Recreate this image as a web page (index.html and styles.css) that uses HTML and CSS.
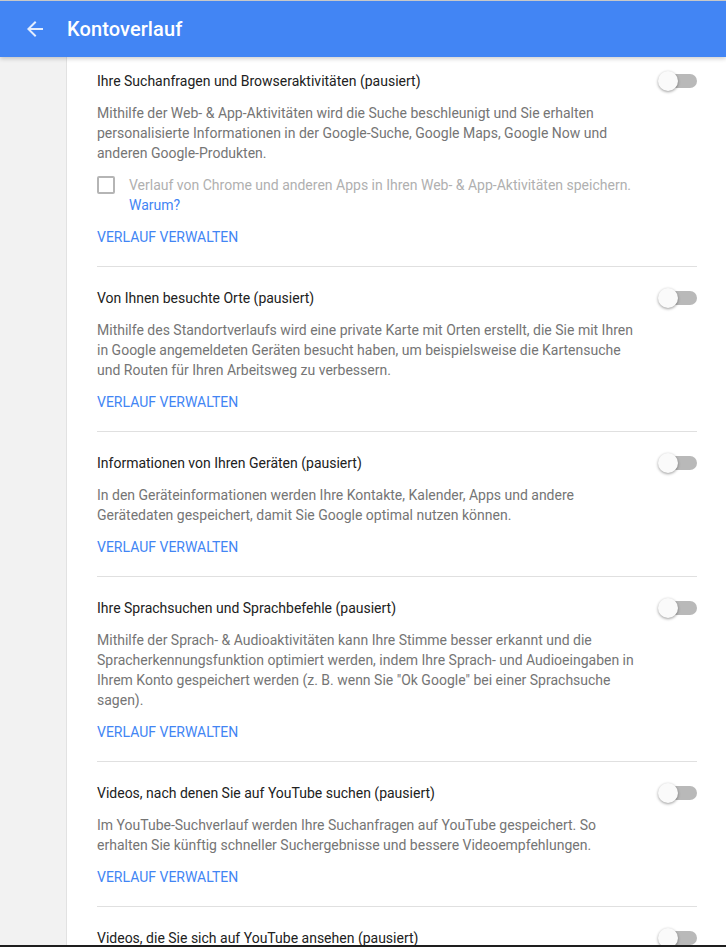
FILE: index.html
```html
<!DOCTYPE html>
<html lang="de">
<head>
<meta charset="utf-8">
<title>Kontoverlauf</title>
<link rel="stylesheet" href="styles.css">
</head>
<body>
<div class="frame">
  <header class="appbar">
    <svg class="back" width="24" height="24" viewBox="0 0 24 24"><path d="M20 11H7.83l5.59-5.59L12 4l-8 8 8 8 1.41-1.41L7.83 13H20v-2z" fill="currentColor"/></svg>
    <h1 class="title">Kontoverlauf</h1>
  </header>
  <div class="body">
    <aside class="side"></aside>
    <main class="content">
      <section class="item first">
        <div class="head"><span class="name">Ihre Suchanfragen und Browseraktivitäten (pausiert)</span><span class="switch"><span class="thumb"></span></span></div>
        <p class="desc">Mithilfe der Web- &amp; App-Aktivitäten wird die Suche beschleunigt und Sie erhalten personalisierte Informationen in der Google-Suche, Google Maps, Google Now und anderen Google-Produkten.</p>
        <div class="check"><span class="box"></span><span class="check-text">Verlauf von Chrome und anderen Apps in Ihren Web- &amp; App-Aktivitäten speichern. <a class="why">Warum?</a></span></div>
        <a class="manage">VERLAUF VERWALTEN</a>
      </section>
      <section class="item">
        <div class="head"><span class="name">Von Ihnen besuchte Orte (pausiert)</span><span class="switch"><span class="thumb"></span></span></div>
        <p class="desc">Mithilfe des Standortverlaufs wird eine private Karte mit Orten erstellt, die Sie mit Ihren in Google angemeldeten Geräten besucht haben, um beispielsweise die Kartensuche und Routen für Ihren Arbeitsweg zu verbessern.</p>
        <a class="manage">VERLAUF VERWALTEN</a>
      </section>
      <section class="item">
        <div class="head"><span class="name">Informationen von Ihren Geräten (pausiert)</span><span class="switch"><span class="thumb"></span></span></div>
        <p class="desc">In den Geräteinformationen werden Ihre Kontakte, Kalender, Apps und andere Gerätedaten gespeichert, damit Sie Google optimal nutzen können.</p>
        <a class="manage">VERLAUF VERWALTEN</a>
      </section>
      <section class="item">
        <div class="head"><span class="name">Ihre Sprachsuchen und Sprachbefehle (pausiert)</span><span class="switch"><span class="thumb"></span></span></div>
        <p class="desc">Mithilfe der Sprach- &amp; Audioaktivitäten kann Ihre Stimme besser erkannt und die Spracherkennungsfunktion optimiert werden, indem Ihre Sprach- und Audioeingaben in Ihrem Konto gespeichert werden (z. B. wenn Sie "Ok Google" bei einer Sprachsuche sagen).</p>
        <a class="manage">VERLAUF VERWALTEN</a>
      </section>
      <section class="item">
        <div class="head"><span class="name">Videos, nach denen Sie auf YouTube suchen (pausiert)</span><span class="switch"><span class="thumb"></span></span></div>
        <p class="desc">Im YouTube-Suchverlauf werden Ihre Suchanfragen auf YouTube gespeichert. So erhalten Sie künftig schneller Suchergebnisse und bessere Videoempfehlungen.</p>
        <a class="manage">VERLAUF VERWALTEN</a>
      </section>
      <section class="item">
        <div class="head"><span class="name">Videos, die Sie sich auf YouTube ansehen (pausiert)</span><span class="switch"><span class="thumb"></span></span></div>
      </section>
    </main>
  </div>
</div>
</body>
</html>
```
FILE: styles.css
```css
* { box-sizing: border-box; }
html, body { margin: 0; padding: 0; }
body {
  width: 726px;
  height: 948px;
  overflow: hidden;
  background: #fff;
  font-family: Roboto, "Noto Sans", Arial, sans-serif;
}
.frame {
  height: 947px;
  border-top: 1px solid #c8c8c8;
  border-bottom: 2px solid #1e1e1e;
  display: flex;
  flex-direction: column;
  overflow: hidden;
}
.appbar {
  flex: 0 0 56px;
  background: #4285f4;
  display: flex;
  align-items: center;
  color: #fff;
  box-shadow: 0 2px 4px rgba(0,0,0,0.18);
  position: relative;
  z-index: 2;
}
.back {
  margin-left: 23px;
  color: rgba(255,255,255,0.85);
}
.title {
  margin: 0 0 0 20px;
  font-size: 20px;
  font-weight: 500;
  line-height: 24px;
  letter-spacing: 0.1px;
}
.body {
  flex: 1;
  display: flex;
  min-height: 0;
}
.side {
  flex: 0 0 67px;
  background: #f2f2f2;
  border-right: 1px solid #e2e2e2;
}
.content {
  flex: 1;
  padding: 0 29px 0 30px;
  overflow: hidden;
}
.item {
  padding: 21px 0 19px;
  border-bottom: 1px solid #e0e0e0;
}
.item.first { padding-top: 14px; }
.head {
  display: flex;
  align-items: center;
  justify-content: space-between;
  height: 20px;
}
.name {
  font-size: 14px;
  line-height: 20px;
  color: #212121;
}
.switch {
  position: relative;
  width: 34px;
  height: 14px;
  border-radius: 7px;
  background: #b9b9b9;
}
.thumb {
  position: absolute;
  left: -5px;
  top: -3px;
  width: 20px;
  height: 20px;
  border-radius: 50%;
  background: #fafafa;
  box-shadow: 0 1px 3px rgba(0,0,0,0.4);
}
.desc {
  margin: 12px 0 0;
  max-width: 545px;
  font-size: 14px;
  line-height: 20px;
  color: #757575;
}
.check {
  margin-top: 12px;
  display: flex;
  align-items: flex-start;
  gap: 14px;
}
.box {
  flex: 0 0 18px;
  height: 18px;
  margin-top: 1px;
  border: 2px solid #b5b5b5;
  border-radius: 2px;
}
.check-text {
  max-width: 540px;
  font-size: 14px;
  line-height: 20px;
  color: #b0b0b0;
}
.why { color: #4285f4; }
.manage {
  display: block;
  margin-top: 12px;
  font-size: 14px;
  line-height: 20px;
  color: #4285f4;
}
```
